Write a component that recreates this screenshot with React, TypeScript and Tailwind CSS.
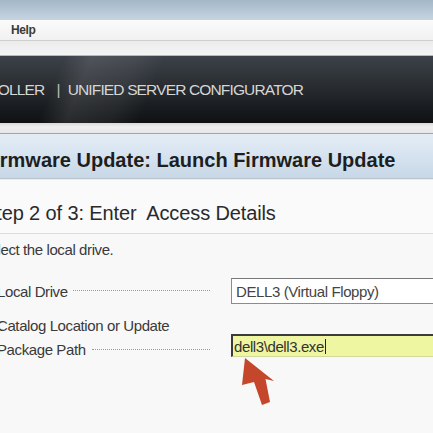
import React from "react";

const font = { fontFamily: '"Liberation Sans", Arial, sans-serif' };

const Arrow: React.FC = () => (
  <svg width="40" height="52" viewBox="240 356 40 52" className="block">
    <polygon
      points="245,358 274,381 265.5,379 270,402 262,405 254,382 242,385"
      fill="#c4462b"
    />
  </svg>
);

export default function App() {
  return (
    <div
      className="w-[433px] h-[433px] overflow-hidden bg-[#f8f8f8] flex flex-col"
      style={font}
    >
      {/* window strip */}
      <div className="h-[20px] shrink-0 bg-[linear-gradient(180deg,#a3b7c8_0%,#b8c9d7_60%,#c6d4df_100%)]" />

      {/* menu bar */}
      <div className="h-[21px] shrink-0 bg-[linear-gradient(180deg,#fbfbfb_0%,#f1f1f1_100%)] border-b border-[#cfcfcf] flex items-center pl-[11px]">
        <span className="text-[12px] font-bold text-[#3a3a3a] leading-none tracking-[-0.4px]">Help</span>
      </div>
      <div className="h-[15px] shrink-0 bg-[linear-gradient(180deg,#ececec_0%,#f4f4f4_100%)] border-b border-[#b9b9b9]" />

      {/* banner */}
      <div className="h-[67px] shrink-0 flex items-center bg-[linear-gradient(112deg,transparent_14%,rgba(255,255,255,0.10)_20%,rgba(255,255,255,0.06)_30%,transparent_36%),linear-gradient(180deg,#3c4249_0%,#2b2f34_40%,#1a1d20_75%,#0f1113_100%)]">
        <div className="flex items-center whitespace-nowrap text-[15.5px] tracking-[-0.85px] text-[#d6d6d6] leading-none">
          <span className="-ml-[53px]">CONTROLLER</span>
          <span className="ml-[12px] text-[#bdbdbd]">|</span>
          <span className="ml-[8px]">UNIFIED SERVER CONFIGURATOR</span>
        </div>
      </div>

      <div className="h-[11px] shrink-0 bg-[linear-gradient(180deg,#d9d9d9_0%,#f0f0f0_40%,#e6e6e6_100%)] border-b border-[#9ea7b0]" />

      {/* page header */}
      <div className="h-[45px] shrink-0 bg-[linear-gradient(180deg,#e4edf6_0%,#d6e3ef_50%,#c8d7e6_100%)] border-b border-[#b9c4cf] pt-[16px] whitespace-nowrap">
        <h1 className="-ml-[18px] text-[20px] font-bold leading-none text-[#1e1e1e]">
          Firmware Update: Launch Firmware Update
        </h1>
      </div>

      {/* step heading */}
      <div className="h-[55px] shrink-0 bg-[#fafafa] border-b border-[#dcdcdc] pt-[23px] whitespace-nowrap border-t border-t-[#ececec]">
        <h2 className="-ml-[17px] text-[20px] leading-none tracking-[-0.12px] text-[#2a2a2a]">
          Step 2 of 3: Enter&nbsp; Access Details
        </h2>
      </div>

      {/* body */}
      <div className="flex-1 flex flex-col whitespace-nowrap text-[15px] tracking-[-0.4px] text-[#3a3a3a]">
        <p className="-ml-[20px] mt-[8px] leading-none">Select the local drive.</p>

        <div className="mt-[21px] h-[26px] flex items-center">
          <div className="-ml-[3px] w-[213px] shrink-0 flex items-center">
            <span className="leading-none">Local Drive</span>
            <span className="flex-1 ml-[5px] border-t border-dotted border-[#9a9a9a] -translate-y-px" />
          </div>
          <div className="ml-[21px] w-[260px] h-[26px] shrink-0 border border-[#8c8c8c] border-t-[#777] bg-white flex items-center pl-[4px] text-[#444]">
            <span className="leading-none">DELL3 (Virtual Floppy)</span>
          </div>
        </div>

        <div className="mt-[10px] flex items-start">
          <div className="-ml-[3px] w-[213px] shrink-0 flex flex-col leading-[24px]">
            <span>Catalog Location or Update</span>
            <div className="flex items-center">
              <span>Package Path</span>
              <span className="flex-1 ml-[6px] border-t border-dotted border-[#9a9a9a] -translate-y-px" />
            </div>
          </div>
          <div className="ml-[21px] shrink-0 flex flex-col">
            <div className="mt-[20px] w-[260px] h-[23px] bg-[#eef6a2] border-t-2 border-l-2 border-[#3b3b3b] border-b border-b-[#d2d89a] flex items-center pl-[1px] text-[#333]">
              <span className="leading-none">dell3\dell3.exe</span>
              <span className="w-px h-[15px] bg-[#222] ml-px" />
            </div>
            <div className="-mt-px ml-[9px]">
              <Arrow />
            </div>
          </div>
        </div>
      </div>
    </div>
  );
}
